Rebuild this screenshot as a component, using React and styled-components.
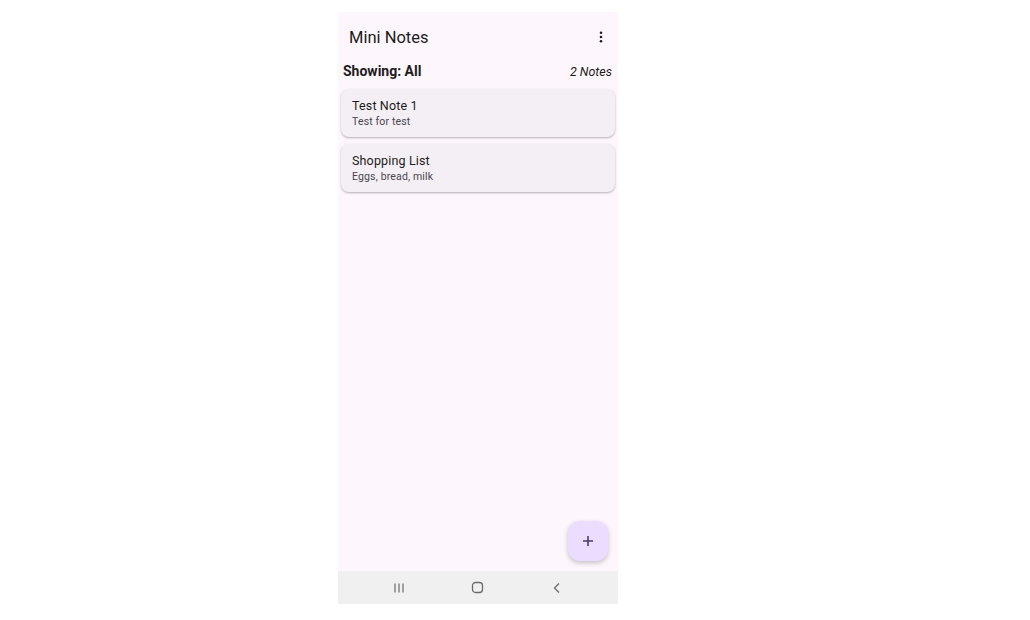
import styled, { createGlobalStyle } from "styled-components"

const GlobalStyle = createGlobalStyle`
  body {
    margin: 0;
    background: #ffffff;
    font-family: Roboto, "Noto Sans", sans-serif;
  }
`

const notes = [
  { id: 1, title: "Test Note 1", body: "Test for test" },
  { id: 2, title: "Shopping List", body: "Eggs, bread, milk" },
]

export default function App() {
  return (
    <>
      <GlobalStyle />
      <Phone>
        <AppBar>
          <Title>Mini Notes</Title>
          <MenuButton aria-label="menu">
            <svg width="4" height="12" viewBox="0 0 4 12">
              <circle cx="2" cy="1.7" r="1.3" fill="#1d1b20" />
              <circle cx="2" cy="6" r="1.3" fill="#1d1b20" />
              <circle cx="2" cy="10.3" r="1.3" fill="#1d1b20" />
            </svg>
          </MenuButton>
        </AppBar>
        <FilterRow>
          <Showing>Showing: All</Showing>
          <Count>2 Notes</Count>
        </FilterRow>
        <NoteList>
          {notes.map((note) => (
            <NoteCard key={note.id}>
              <NoteTitle>{note.title}</NoteTitle>
              <NoteBody>{note.body}</NoteBody>
            </NoteCard>
          ))}
        </NoteList>
        <Fab aria-label="add">
          <svg width="12" height="12" viewBox="0 0 12 12">
            <path d="M6 1v10M1 6h10" stroke="#4a3b6e" strokeWidth="1.6" />
          </svg>
        </Fab>
        <NavBar>
          <NavIcon>
            <svg width="12" height="12" viewBox="0 0 12 12">
              <path d="M2 1.5v9M6 1.5v9M10 1.5v9" stroke="#6b6b6b" strokeWidth="1.2" />
            </svg>
          </NavIcon>
          <NavIcon>
            <svg width="13" height="13" viewBox="0 0 13 13">
              <rect x="1.5" y="1.5" width="10" height="10" rx="3" fill="none" stroke="#6b6b6b" strokeWidth="1.3" />
            </svg>
          </NavIcon>
          <NavIcon>
            <svg width="12" height="12" viewBox="0 0 12 12">
              <path d="M8 1.5L3.5 6 8 10.5" fill="none" stroke="#6b6b6b" strokeWidth="1.3" />
            </svg>
          </NavIcon>
        </NavBar>
      </Phone>
    </>
  )
}

const Phone = styled.div`
  position: relative;
  width: 280px;
  height: 592px;
  margin: 12px 0 0 338px;
  background: #fdf7fd;
  display: flex;
  flex-direction: column;
  overflow: hidden;
`

const AppBar = styled.div`
  height: 50px;
  display: flex;
  align-items: center;
  justify-content: space-between;
  padding: 0 7px 0 11px;
`

const Title = styled.h1`
  margin: 0;
  font-size: 16.5px;
  font-weight: 400;
  color: #1d1b20;
`

const MenuButton = styled.div`
  width: 20px;
  height: 20px;
  display: flex;
  align-items: center;
  justify-content: center;
`

const FilterRow = styled.div`
  height: 18px;
  display: flex;
  align-items: center;
  justify-content: space-between;
  padding: 0 6px 0 5px;
`

const Showing = styled.span`
  font-size: 14px;
  font-weight: 700;
  color: #1d1b20;
`

const Count = styled.span`
  font-size: 12.5px;
  font-style: italic;
  color: #1d1b20;
`

const NoteList = styled.div`
  flex: 1;
  display: flex;
  flex-direction: column;
  gap: 7px;
  padding: 9px 3px 0 3px;
`

const NoteCard = styled.div`
  height: 48px;
  box-sizing: border-box;
  padding: 9px 11px 0;
  background: #f4eff5;
  border-radius: 8px;
  box-shadow: 0 1px 2px rgb(0 0 0 / 22%), 0 1px 3px rgb(0 0 0 / 8%);
`

const NoteTitle = styled.div`
  font-size: 12.5px;
  line-height: 16px;
  color: #1d1b20;
  letter-spacing: 0.15px;
`

const NoteBody = styled.div`
  font-size: 10.5px;
  line-height: 16px;
  color: #49454f;
  letter-spacing: 0.15px;
`

const Fab = styled.div`
  position: absolute;
  right: 10px;
  bottom: 43px;
  width: 40px;
  height: 40px;
  border-radius: 12px;
  background: #eaddff;
  display: flex;
  align-items: center;
  justify-content: center;
  box-shadow: 0 2px 5px rgb(0 0 0 / 22%);
`

const NavBar = styled.div`
  height: 33px;
  background: #f0f0f0;
  display: grid;
  grid-template-columns: 1fr 1fr 1fr;
  align-items: center;
  padding: 0 22px;
`

const NavIcon = styled.div`
  justify-self: center;
  display: flex;
`
